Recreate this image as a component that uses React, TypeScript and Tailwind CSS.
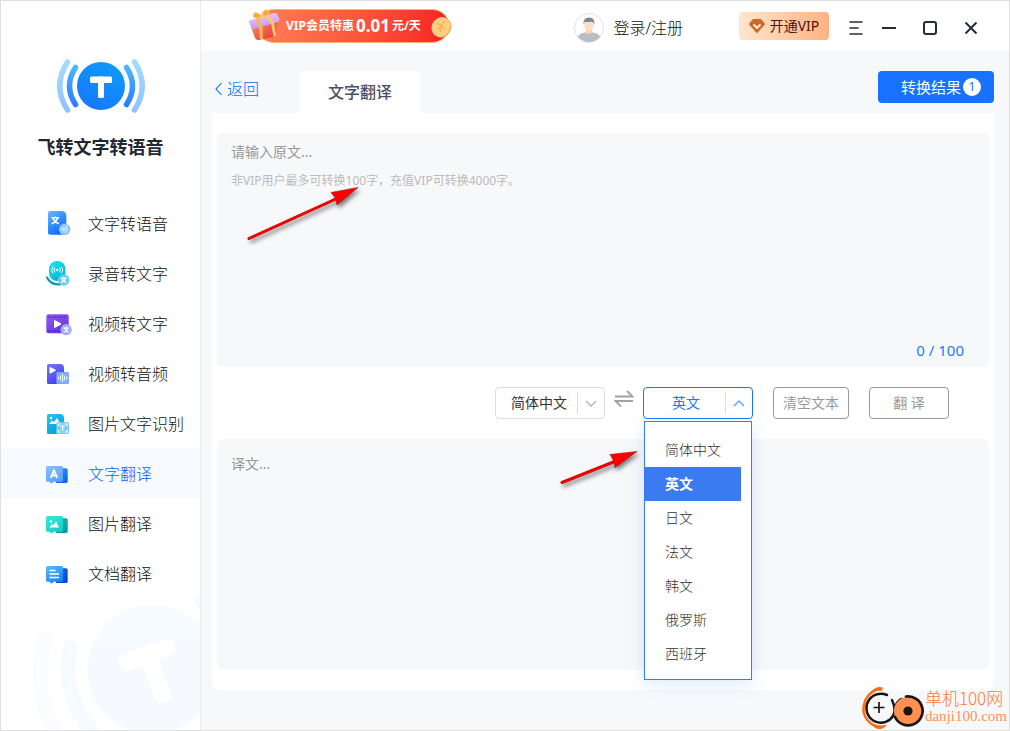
import { useState, type ReactNode } from 'react';

const LANGUAGES = ['简体中文', '英文', '日文', '法文', '韩文', '俄罗斯', '西班牙'];

function Logo() {
  return (
    <svg className="h-[56px] w-[90px]" viewBox="0 0 90 56" fill="none" aria-hidden="true">
      <defs>
        <linearGradient id="logoFill" x1="0.8" y1="0" x2="0.2" y2="1">
          <stop stopColor="#0f9bff" />
          <stop offset="1" stopColor="#1677ff" />
        </linearGradient>
        <linearGradient id="logoInner" x1="0" y1="8" x2="0" y2="48" gradientUnits="userSpaceOnUse">
          <stop stopColor="#4db8ff" />
          <stop offset="1" stopColor="#2a7cff" />
        </linearGradient>
        <linearGradient id="logoOuter" x1="0" y1="0" x2="0" y2="56" gradientUnits="userSpaceOnUse">
          <stop stopColor="#a6dcff" />
          <stop offset="1" stopColor="#8fc2ff" />
        </linearGradient>
      </defs>
      <circle cx="45" cy="28" r="24" fill="url(#logoFill)" />
      <rect x="34" y="18.500" width="22" height="6.500" rx="1.5" fill="#fff" />
      <rect x="42" y="18.500" width="6" height="21.500" rx="1.5" fill="#fff" />
      <path d="M19.5 9.5Q7.5 28 19.5 46.5M70.500 9.5Q82.500 28 70.500 46.500" stroke="url(#logoInner)" strokeWidth="5.500" strokeLinecap="round" />
      <path d="M11.500 4Q-4 28 11.500 52M78.500 4Q94 28 78.500 52" stroke="url(#logoOuter)" strokeWidth="5.500" strokeLinecap="round" />
    </svg>
  );
}

function Icon({ children }: { children: ReactNode }) {
  return (
    <svg className="h-[26px] w-[26px] shrink-0" viewBox="0 0 26 26" fill="none" aria-hidden="true">
      {children}
    </svg>
  );
}

function Gradient({ id, from, to }: { id: string; from: string; to: string }) {
  return (
    <defs>
      <linearGradient id={id} x1="0" y1="0" x2="0.6" y2="1">
        <stop stopColor={from} />
        <stop offset="1" stopColor={to} />
      </linearGradient>
    </defs>
  );
}

const WEN = 'M0 -3.600V-2.400M-3.800 -2.200H3.800M-2.400 -2.200Q-1.200 2 3.600 3.800M2.400 -2.200Q1.200 2 -3.600 3.800';

function TextToSpeechIcon() {
  return (
    <Icon>
      <Gradient id="g1" from="#6bb8ff" to="#0a6af5" />
      <path d="M4 0H16.500Q20 1 20.300 4V23.700H4Q2 23.700 2 21.700V2Q2 0 4 0Z" fill="url(#g1)" />
      <path d={WEN} transform="translate(9.300 9)" stroke="#fff" strokeWidth="1.500" />
      <circle cx="18.700" cy="18.300" r="5.800" fill="#8fc8fb" />
      <circle cx="16.500" cy="18.300" r="1" fill="#fff" />
      <path d="M18 16.500q1.500 1.800 0 3.600M20 15.200q2.600 3.100 0 6.200" stroke="#fff" strokeWidth="0.900" strokeLinecap="round" />
    </Icon>
  );
}

function RecordIcon() {
  return (
    <Icon>
      <Gradient id="g2" from="#12edec" to="#08b2d8" />
      <path d="M1 16.500Q4 23.500 14 23.500" stroke="#0796a9" strokeWidth="2" strokeLinecap="round" />
      <rect x="3" y="0" width="16.400" height="20" rx="8" fill="url(#g2)" />
      <circle cx="11.200" cy="9" r="1.200" fill="#fff" />
      <path d="M8.700 7q-1.600 2 0 4M13.700 7q1.600 2 0 4M6.800 5.800q-2.600 3.200 0 6.400M15.600 5.800q2.600 3.200 0 6.400" stroke="#fff" strokeLinecap="round" />
      <circle cx="17.700" cy="19" r="5.800" fill="#68cdec" />
      <path d={WEN} transform="translate(17.700 18.800) scale(.75)" stroke="#fff" strokeWidth="1.500" />
    </Icon>
  );
}

function VideoToTextIcon() {
  return (
    <Icon>
      <Gradient id="g3" from="#915df0" to="#6337dc" />
      <rect x="0.300" y="3.300" width="22.400" height="19" rx="2" fill="url(#g3)" />
      <path d="M2.500 6H21M2.500 20H14" stroke="#4d25b5" strokeWidth="1.500" strokeDasharray="1.500 1.500" />
      <path d="M8.500 9.500L15 13L8.500 16.500Z" fill="#fff" stroke="#fff" strokeLinejoin="round" />
      <circle cx="20.200" cy="18.700" r="5.600" fill="#a3adf5" />
      <path d={WEN} transform="translate(20.200 18.500) scale(.7)" stroke="#fff" strokeWidth="1.500" />
    </Icon>
  );
}

function VideoToAudioIcon() {
  return (
    <Icon>
      <Gradient id="g4" from="#7a76ff" to="#4440e8" />
      <path d="M2.500 3H14.500Q18 3.500 18 7V23H2.500Q1 23 1 21.500V4.500Q1 3 2.500 3Z" fill="url(#g4)" />
      <path d="M4 6.500L9.500 9.300L4 12.200Z" fill="#fff" stroke="#fff" strokeLinejoin="round" />
      <rect x="10.300" y="11" width="12.700" height="12" rx="1.500" fill="#7cadfb" />
      <path d="M12.500 16v2M14.500 15v4M16.600 13.500v7M18.700 15v4M20.800 16v2" stroke="#fff" strokeLinecap="round" />
    </Icon>
  );
}

function ImageRecognizeIcon() {
  return (
    <Icon>
      <Gradient id="g5" from="#27c5f7" to="#079ed5" />
      <path d="M2.500 3H14.500Q18 3.500 18 7V23H2.500Q1 23 1 21.500V4.500Q1 3 2.500 3Z" fill="url(#g5)" />
      <path d="M3 13L6 9.500L8 11L11 7L14.500 13Z" fill="#fff" />
      <circle cx="5" cy="7" r="1.200" fill="#fff" />
      <rect x="10.300" y="11" width="12.700" height="12" rx="1.500" fill="#7ecff0" />
      <path d="M12.300 15v-2h2M19 13h2v2M21 19v2h-2M14.300 21h-2v-2M14.300 15h4.700M16.700 15v4.800" stroke="#fff" strokeWidth="1.100" />
    </Icon>
  );
}

function Bubble({ id, from, to, back, backTo, children }: {
  id: string; from: string; to: string; back: string; backTo: string; children: ReactNode;
}) {
  return (
    <Icon>
      <Gradient id={id} from={from} to={to} />
      <Gradient id={`${id}b`} from={back} to={backTo} />
      <path d="M10 7.300H20Q21.700 7.300 21.700 9V20.500Q21.700 22 20 22H10Z" fill={`url(#${id}b)`} />
      <path d="M1.500 5H15.500Q17 5 17 6.500V19.200Q17 20.700 15.500 20.700H7.500L5.500 22.700L3.500 20.700H1.500Q0 20.700 0 19.200V6.500Q0 5 1.500 5Z" fill={`url(#${id})`} />
      {children}
    </Icon>
  );
}

function TextTranslateIcon() {
  return (
    <Bubble id="g6" from="#84c5ff" to="#5ba0fb" back="#2898ff" backTo="#1264ef">
      <path d="M4.700 16.800L8 9.200L11.300 16.800M5.800 14.500H10.200" stroke="#fff" strokeWidth="1.900" strokeLinejoin="round" />
    </Bubble>
  );
}

function ImageTranslateIcon() {
  return (
    <Bubble id="g7" from="#31eede" to="#18cbc7" back="#10bdb9" backTo="#089c9e">
      <path d="M3.500 16.500L6 13L7.500 14.300L10 10L13 16.500Z" fill="#fff" />
      <circle cx="5" cy="10.500" r="1.200" fill="#fff" />
    </Bubble>
  );
}

function DocTranslateIcon() {
  return (
    <Bubble id="g8" from="#62bafd" to="#1087fa" back="#2064fa" backTo="#0a47d4">
      <path d="M3.500 9.500H9.500M3.500 13H13M3.500 16.500H13" stroke="#fff" strokeWidth="1.400" />
    </Bubble>
  );
}

const NAV = [
  { label: '文字转语音', icon: <TextToSpeechIcon /> },
  { label: '录音转文字', icon: <RecordIcon /> },
  { label: '视频转文字', icon: <VideoToTextIcon /> },
  { label: '视频转音频', icon: <VideoToAudioIcon /> },
  { label: '图片文字识别', icon: <ImageRecognizeIcon /> },
  { label: '文字翻译', icon: <TextTranslateIcon /> },
  { label: '图片翻译', icon: <ImageTranslateIcon /> },
  { label: '文档翻译', icon: <DocTranslateIcon /> },
];

function Sidebar() {
  const [active, setActive] = useState('文字翻译');
  return (
    <aside className="relative flex w-[200px] shrink-0 flex-col border-r border-[#ebecee] bg-white">
      <svg className="pointer-events-none absolute right-0 bottom-0 h-[140px] w-[170px]" viewBox="30 590 170 140" fill="none" aria-hidden="true">
        <defs>
          <linearGradient id="ghost" x1="0.450" y1="0" x2="0.550" y2="1">
            <stop stopColor="#f5fcff" />
            <stop offset="0.250" stopColor="#f5fbff" />
            <stop offset="0.300" stopColor="#f6faff" />
          </linearGradient>
        </defs>
        <circle cx="152" cy="670" r="64.500" fill="url(#ghost)" />
        <circle cx="201" cy="601" r="7.500" fill="#f5fbff" />
        <path d="M71 647Q59 690 94 735" stroke="#f6fbff" strokeWidth="14.500" strokeLinecap="round" />
        <path d="M45 639Q31 690 58 740" stroke="#fafcff" strokeWidth="14.500" strokeLinecap="round" />
        <g transform="rotate(-20 147 654)" fill="#fff">
          <rect x="118" y="646" width="58" height="17" rx="5" />
          <rect x="139" y="646" width="17" height="59" rx="5" />
        </g>
      </svg>
      <div className="flex flex-col items-center pt-[57px]">
        <Logo />
        <h1 className="mt-[19px] text-lg leading-7 font-bold text-[#1f2733]">飞转文字转语音</h1>
      </div>
      <nav className="relative mt-[38px]">
        <ul>
          {NAV.map((item) => (
            <li key={item.label}>
              <button
                type="button"
                onClick={() => setActive(item.label)}
                aria-current={item.label === active ? 'page' : undefined}
                className={`flex h-[50px] w-full items-center gap-4 pl-[45px] text-base font-light whitespace-nowrap ${
                  item.label === active ? 'bg-[#f7faff] text-[#0068ff]' : 'text-[#111]'
                }`}
              >
                {item.icon}
                {item.label}
              </button>
            </li>
          ))}
        </ul>
      </nav>
    </aside>
  );
}

function PromoBanner() {
  return (
    <a href="#vip" className="relative ml-14 flex h-[34px] w-[192px] shrink-0 items-center gap-[2px] rounded-full border-y border-[#ffb968] bg-gradient-to-r from-[#ff7d57] to-[#f71d22] pl-[29px] text-xs font-bold whitespace-nowrap text-white">
      <svg className="absolute -top-px -left-[10px] h-[34px] w-9" viewBox="0 0 36 34" fill="none" aria-hidden="true">
        <defs>
          <linearGradient id="giftBox" x1="0" y1="0" x2="1" y2="1">
            <stop stopColor="#ff8a6a" />
            <stop offset="1" stopColor="#e2352f" />
          </linearGradient>
          <linearGradient id="giftLid" x1="0" y1="0" x2="0.300" y2="1">
            <stop stopColor="#f0d4fb" />
            <stop offset="1" stopColor="#c894ea" />
          </linearGradient>
        </defs>
        <path d="M4 18L30 13L28.500 25Q28 27 26 28L12 31Q9 31.500 8 29Z" fill="url(#giftBox)" />
        <path d="M2 13Q1 12 3 11.300L27 4Q29 3.500 30 5L32.500 10Q33 12 31 13L7 20Q5 20.500 4.300 19Z" fill="url(#giftLid)" />
        <path d="M8.500 10L12 18.500L13 31L16 30.500L15.500 18L12 9Z" fill="#f7b45b" />
        <path d="M18 7L24 14L26.500 27.500L29 26.500L27 13L21.500 6Z" fill="#ffc773" />
        <path d="M15.500 8Q8 10 6.500 7.500Q6 3 10 4Q13 5 15.500 8ZM15.500 8Q15 1 19 1Q23 1 22 4Q20 7 15.500 8Z" fill="#f6a83c" stroke="#ffc368" strokeLinejoin="round" />
        <circle cx="15.500" cy="7.500" r="1.800" fill="#ffcb77" />
      </svg>
      <span>VIP会员特惠</span>
      <span className="text-[17px]">0.01</span>
      <span>元/天</span>
      <svg className="absolute top-[5px] -right-[3px] h-6 w-[22px]" viewBox="0 0 22 24" fill="none" aria-hidden="true">
        <ellipse cx="12" cy="12.500" rx="9" ry="10.300" fill="#f3a84a" transform="rotate(28 12 12.500)" />
        <ellipse cx="10.800" cy="12" rx="9" ry="10.200" fill="#ffd083" transform="rotate(28 10.800 12)" />
        <path d="M7 8L10 11L15 6M7 14L14 11M10 17L11 12L15 14" stroke="#f0a850" strokeWidth="1.200" strokeDasharray="3 1" />
      </svg>
    </a>
  );
}

function Header() {
  return (
    <header className="flex h-[50px] shrink-0 items-center bg-white pr-[31px]">
      <PromoBanner />
      <a href="#login" className="ml-auto flex items-center gap-[9px] pt-1 text-base font-light whitespace-nowrap text-[#111]">
        <svg className="h-[30px] w-[30px]" viewBox="0 0 30 30" fill="none" aria-hidden="true">
          <defs>
            <clipPath id="avatarClip"><circle cx="15" cy="15" r="14" /></clipPath>
          </defs>
          <circle cx="15" cy="15" r="14.500" fill="#fff" stroke="#dfe1e4" />
          <g clipPath="url(#avatarClip)">
            <path d="M2 30Q2 21 11 19.500H19Q28 21 28 30Z" fill="#b7bec6" />
            <path d="M12 16H18V19.500Q15 23.500 12 19.500Z" fill="#f8cdb5" />
            <ellipse cx="15" cy="12.500" rx="4.700" ry="6" fill="#ffdcc8" />
            <path d="M9.800 12Q8.500 4.500 15 4.500Q21.500 4.500 20.200 12Q19.500 8.500 17.500 8.700Q12 9.500 10.800 8.500Z" fill="#7b8794" />
          </g>
        </svg>
        登录/注册
      </a>
      <button type="button" className="ml-14 flex h-7 w-[90px] shrink-0 items-center justify-center gap-[5px] rounded bg-gradient-to-r from-[#fde6d0] to-[#ffb281] text-sm whitespace-nowrap text-[#4f1208]">
        <svg className="h-4 w-4" viewBox="0 0 16 16" fill="none" aria-hidden="true">
          <path d="M4 1.500H12L15.700 6.200L8 14.800L0.300 6.200Z" fill="#cb6a24" stroke="#cb6a24" strokeLinejoin="round" />
          <path d="M4.500 6.500L8 9.800L11.500 6.500" stroke="#fff0dc" strokeWidth="2" />
        </svg>
        开通VIP
      </button>
      <div className="ml-5 flex items-center gap-[27px] pt-1 text-[#262b3a]">
        <div className="flex items-center gap-[19px]">
          <button type="button" aria-label="菜单">
            <svg className="h-[14px] w-[14px]" viewBox="0 0 14 14" stroke="currentColor" strokeWidth="1.600" fill="none" strokeLinecap="round"><path d="M1 1H13M1 7H9M1 13H13" /></svg>
          </button>
          <button type="button" aria-label="最小化">
            <svg className="h-[14px] w-[14px]" viewBox="0 0 14 14" stroke="currentColor" strokeWidth="2" fill="none"><path d="M0 7H14" /></svg>
          </button>
        </div>
        <button type="button" aria-label="最大化">
          <svg className="h-[14px] w-[14px]" viewBox="0 0 14 14" stroke="currentColor" strokeWidth="2" fill="none"><rect x="1" y="1" width="12" height="12" rx="2" /></svg>
        </button>
        <button type="button" aria-label="关闭">
          <svg className="h-[14px] w-[14px]" viewBox="0 0 14 14" stroke="currentColor" strokeWidth="2" fill="none"><path d="M1.500 1.500L12.500 12.500M12.500 1.500L1.500 12.500" /></svg>
        </button>
      </div>
    </header>
  );
}

function Arrow({ className, viewBox, line, head }: { className: string; viewBox: string; line: string; head: string }) {
  return (
    <svg className={`pointer-events-none absolute overflow-visible drop-shadow-[2px_3px_2px_rgba(0,0,0,0.5)] ${className}`} viewBox={viewBox} fill="none" aria-hidden="true">
      <path d={line} stroke="#a01010" strokeWidth="3" strokeLinecap="round" />
      <path d={head} fill="#f00" stroke="#a01010" strokeWidth="0.600" />
      <path d={line} stroke="#f00" strokeWidth="2.400" strokeLinecap="round" />
    </svg>
  );
}

function LanguageSelect({ label, value, open, onChange, onToggle }: {
  label: string; value: string; open?: boolean; onChange: (value: string) => void; onToggle?: () => void;
}) {
  return (
    <div className={`flex h-8 w-[110px] items-center rounded border bg-white ${open ? 'border-[#1677ff] text-[#1677ff]' : 'border-[#dcdee2] text-[#333]'}`}>
      <select
        aria-label={label}
        value={value}
        onChange={(event) => onChange(event.target.value)}
        onMouseDown={(event) => {
          if (onToggle) {
            event.preventDefault();
            onToggle();
          }
        }}
        className={`h-full min-w-0 flex-1 appearance-none bg-transparent text-sm outline-none ${open ? 'pl-7' : 'pl-[15px]'}`}
      >
        {LANGUAGES.map((name) => (
          <option key={name}>{name}</option>
        ))}
      </select>
      <span className="flex h-[22px] w-[27px] items-center justify-center border-l border-[#dcdee2]">
        <svg className="h-[7px] w-3" viewBox="0 0 12 7" fill="none" stroke={open ? '#5c9dfa' : '#b5b5b5'} strokeWidth="1.300" aria-hidden="true">
          <path d={open ? 'M1 6L6 1L11 6' : 'M1 1L6 6L11 1'} />
        </svg>
      </span>
    </div>
  );
}

function SiteMark() {
  return (
    <div className="pointer-events-none absolute right-[2px] bottom-0 flex items-center gap-px text-[#ff9355]">
      <svg className="h-11 w-[63px]" viewBox="0 0 63 44" fill="none" aria-hidden="true">
        <path d="M19 2.500Q9 5 4.500 14Q-0.500 26 6.500 34Q11 40 19 41.500" stroke="#ff6d12" strokeWidth="2.500" />
        <path d="M10 6Q16 -1 22 2L20.500 5Q15 3.500 10 6ZM12 38Q20 40.500 26 38.500Q22 45 14 42Z" fill="#ff6d12" />
        <path d="M26 9A14.500 14.500 0 1 0 29 33.500Q34 29 33.500 23Q35 16 40 13M33.500 23Q33 18 31 14" stroke="#1b1414" strokeWidth="2.500" strokeLinecap="round" />
        <path d="M18 16V27M12.500 21.500H23.500" stroke="#1b1414" strokeWidth="1.700" />
        <circle cx="47" cy="25" r="14" fill="#ff9150" />
        <path d="M45 10.500A14.500 14.500 0 1 1 34 31" stroke="#1b1414" strokeWidth="2.700" strokeLinecap="round" />
        <circle cx="47" cy="25" r="4.600" fill="#1b1414" />
      </svg>
      <div className="pb-1 whitespace-nowrap">
        <p className="font-['Noto_Sans_CJK_SC',sans-serif] text-[17px] leading-5 font-light text-[#ff7a30]">单机100网</p>
        <p className="font-['Liberation_Serif',serif] text-[15px] leading-4">danji100.com</p>
      </div>
    </div>
  );
}

function Translator() {
  const [source, setSource] = useState('简体中文');
  const [target, setTarget] = useState('英文');
  const [open, setOpen] = useState(true);
  const [text, setText] = useState('');

  return (
    <section className="flex flex-1 flex-col rounded-b-lg rounded-tr bg-white px-[5px] py-5">
      <div className="relative grid h-[234px] rounded-md bg-[#f7f8fa]">
        <textarea
          aria-label="原文"
          placeholder="请输入原文..."
          value={text}
          maxLength={100}
          onChange={(event) => setText(event.target.value)}
          className="col-start-1 row-start-1 resize-none bg-transparent px-[14px] py-[7px] text-sm leading-6 text-[#333] outline-none placeholder:text-[#999]"
        />
        {text === '' && (
          <p className="pointer-events-none col-start-1 row-start-1 px-[14px] pt-[38px] text-xs leading-5 text-[#bbb]">
            非VIP用户最多可转换100字，充值VIP可转换4000字。
          </p>
        )}
        <p className="pointer-events-none col-start-1 row-start-1 self-end pr-[25px] pb-[7px] text-right text-[15px] leading-5 text-[#1a80f5]">
          {text.length} / 100
        </p>
        <Arrow
          className="top-[50px] left-[23px] h-[65px] w-[130px]"
          viewBox="240 183 130 65"
          line="M249 238.500L338 198"
          head="M358 187.500L331 192.500L336 198.500L337 205Z"
        />
      </div>

      <div className="my-5 flex items-center justify-end gap-5 pr-10">
        <div className="flex items-center gap-[9px]">
          <LanguageSelect label="源语言" value={source} onChange={setSource} />
          <button
            type="button"
            aria-label="交换语言"
            className="pb-2"
            onClick={() => {
              setSource(target);
              setTarget(source);
            }}
          >
            <svg className="h-[18px] w-5" viewBox="0 0 20 18" fill="none" stroke="#a3a3a3" strokeWidth="1.900" aria-hidden="true">
              <path d="M1 6.500H18.500L13 1M19 11H1.500L7 16.500" />
            </svg>
          </button>
          <div className="relative">
            <LanguageSelect label="目标语言" value={target} open={open} onChange={setTarget} onToggle={() => setOpen(!open)} />
            {open && (
              <ul className="absolute top-[34px] left-px z-10 w-[108px] border border-[#3a7bf2] bg-white pt-[11px] pb-2 shadow-[0_4px_16px_rgba(22,119,255,0.15)]">
                {LANGUAGES.map((name) => (
                  <li key={name}>
                    <button
                      type="button"
                      onClick={() => {
                        setTarget(name);
                        setOpen(false);
                      }}
                      className={`block h-[34px] w-24 pl-5 text-left text-sm ${name === target ? 'bg-[#3a7bf2] font-bold text-white' : 'font-light text-[#333]'}`}
                    >
                      {name}
                    </button>
                  </li>
                ))}
              </ul>
            )}
            <Arrow
              className="top-[55px] -left-[90px] z-20 h-[50px] w-[90px]"
              viewBox="553 442 90 50"
              line="M562 482.500L616 461"
              head="M637 451.500L610 454.500L614 461L615 467.500Z"
            />
          </div>
        </div>
        <button type="button" onClick={() => setText('')} className="h-8 w-[76px] rounded border border-[#999] text-sm whitespace-nowrap text-[#999]">
          清空文本
        </button>
        <button type="button" className="h-8 w-20 rounded border border-[#999] text-sm text-[#999]">
          翻 译
        </button>
      </div>

      <textarea
        aria-label="译文"
        placeholder="译文..."
        readOnly
        className="flex-1 resize-none rounded-md bg-[#f7f8fa] px-[14px] py-[13px] text-sm leading-6 text-[#333] outline-none placeholder:text-[#999]"
      />
    </section>
  );
}

export default function App() {
  return (
    <div className="relative flex min-h-screen border border-[#e0e0e0] bg-[#f7f8fa] font-['Noto_Sans','Noto_Sans_CJK_SC',sans-serif]">
      <Sidebar />
      <div className="flex min-w-0 flex-1 flex-col">
        <Header />
        <main className="flex flex-1 flex-col pt-5 pr-[15px] pb-10 pl-[11px]">
          <div className="flex h-[42px] items-start">
            <a href="#back" className="flex h-9 w-[88px] items-center gap-[5px] pl-[3px] text-base font-light text-[#0068ff]">
              <svg className="h-[14px] w-[7px]" viewBox="0 0 7 14" fill="none" stroke="currentColor" strokeWidth="1.100" aria-hidden="true">
                <path d="M6.500 1L1 7L6.500 13" />
              </svg>
              返回
            </a>
            <h2 className="flex h-full w-[120px] items-center justify-center rounded-t bg-white text-base font-medium text-[#4a4f68]">文字翻译</h2>
            <button type="button" className="ml-auto flex h-8 items-center gap-[2px] rounded bg-[#1672ff] pr-[13px] pl-[23px] text-[15px] text-white">
              转换结果
              <span className="flex h-[18px] w-[18px] items-center justify-center rounded-full bg-white text-xs leading-none text-[#1672ff]">1</span>
            </button>
          </div>
          <Translator />
        </main>
      </div>
      <SiteMark />
    </div>
  );
}
